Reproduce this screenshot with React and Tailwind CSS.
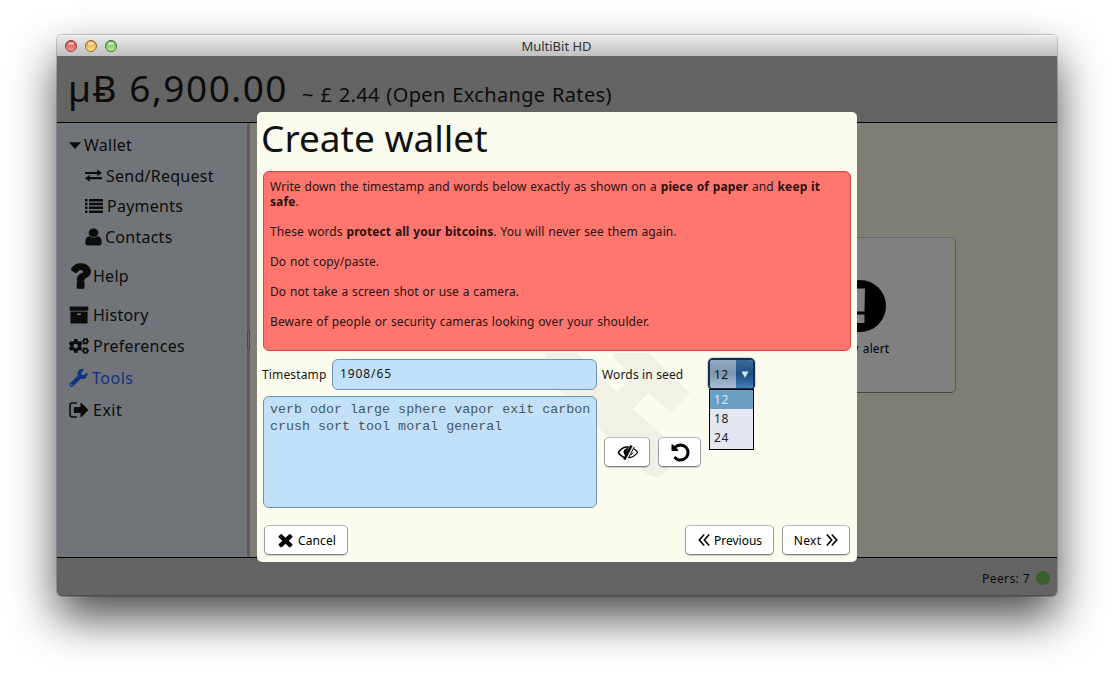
import React from 'react';
import { FaCogs, FaWrench } from 'react-icons/fa';

function Glyph({ d, className, weight = 0 }) {
  return (
    <svg viewBox="0 0 1792 1792" preserveAspectRatio="none" fill="currentColor" stroke="currentColor" strokeWidth={weight} className={'shrink-0 ' + className}>
      <path d={d} />
    </svg>
  );
}

const QUESTION =
  'M1088 1256v240q0 16-12 28t-28 12h-240q-16 0-28-12t-12-28v-240q0-16 12-28t28-12h240q16 0 28 12t12 28zm316-600q0 54-15.5 101t-35 76.5-55 59.5-57.5 43.5-61 35.5q-41 23-68.5 65t-27.500 67q0 17-12 32.500t-28 15.500h-240q-15 0-25.500-18.500t-10.500-37.500v-45q0-83 65-156.500t143-108.500q59-27 84-56t25-76q0-42-46.500-74t-107.500-32q-65 0-108 29-35 25-107 115-13 16-31 16-12 0-25-8l-164-125q-13-10-15.500-25t5.500-28q160-266 464-266 80 0 161 31t146 83 106 127.500 41 158.500z';
const TIMES =
  'M1490 1322q0 40-28 68l-136 136q-28 28-68 28t-68-28l-294-294-294 294q-28 28-68 28t-68-28l-136-136q-28-28-28-68t28-68l294-294-294-294q-28-28-28-68t28-68l136-136q28-28 68-28t68 28l294 294 294-294q28-28 68-28t68 28l136 136q28 28 28 68t-28 68l-294 294 294 294q28 28 28 68z';
const USER =
  'M1536 1399q0 109-62.5 187t-150.5 78h-854q-88 0-150.5-78t-62.5-187q0-85 8.5-160.5t31.5-152 58.5-131 94-89 134.5-34.5q131 128 313 128t313-128q76 0 134.5 34.5t94 89 58.5 131 31.5 152 8.5 160.5zm-256-887q0 159-112.5 271.5t-271.5 112.5-271.5-112.5-112.5-271.5 112.5-271.5 271.5-112.5 271.5 112.5 112.5 271.5z';
const UNDO =
  'M1664 896q0 156-61 298t-164 245-245 164-298 61q-172 0-327-72.5t-264-204.5q-7-10-6.5-22.5t8.5-20.5l137-138q10-9 25-9 16 2 23 12 73 95 179 147t225 52q104 0 198.5-40.5t163.5-109.5 109.5-163.5 40.5-198.5-40.5-198.5-109.5-163.5-163.5-109.5-198.5-40.5q-98 0-188 35.5t-160 101.5l137 138q31 30 14 69-17 40-59 40h-448q-26 0-45-19t-19-45v-448q0-42 40-59 39-17 69 14l130 129q107-101 244.5-156.5t284.5-55.5q156 0 298 61t245 164 164 245 61 298z';
const ARCHIVE =
  'M1088 832q0-26-19-45t-45-19h-256q-26 0-45 19t-19 45 19 45 45 19h256q26 0 45-19t19-45zm576-192v960q0 26-19 45t-45 19h-1408q-26 0-45-19t-19-45v-960q0-26 19-45t45-19h1408q26 0 45 19t19 45zm64-448v256q0 26-19 45t-45 19h-1536q-26 0-45-19t-19-45v-256q0-26 19-45t45-19h1536q26 0 45 19t19 45z';

const button =
  'flex h-[30px] items-center rounded-[5px] border border-t-[#bdbdbd] border-x-[#9c9c9c] border-b-[#808080] bg-white text-black shadow-[0_1px_1px_rgba(0,0,0,0.18)]';

function TrafficLight({ className }) {
  return (
    <span className={'relative flex h-3 w-3 justify-center rounded-full border ' + className}>
      <span className="mt-px h-[3px] w-[6px] rounded-full bg-white/60" />
    </span>
  );
}

function TitleBar() {
  return (
    <div className="flex h-[21px] items-center rounded-t-[5px] border-t border-[#f6f6f6] bg-linear-to-b from-[#e9e9e9] to-[#c0c0c0] pl-2">
      <div className="flex w-[120px] gap-2">
        <TrafficLight className="border-[#8f3a3c] bg-linear-to-b from-[#cf2f38] to-[#ff9a98]" />
        <TrafficLight className="border-[#946228] bg-linear-to-b from-[#dd9230] to-[#ffe88a]" />
        <TrafficLight className="border-[#3f7a2d] bg-linear-to-b from-[#5fae4a] to-[#b9f29a]" />
      </div>
      <div className="flex-1 pr-[129px] text-center text-[13px] leading-none text-[#333]">MultiBit HD</div>
    </div>
  );
}

function Header() {
  return (
    <header className="flex h-[67px] items-baseline border-b border-black bg-[#646464] pl-[11px] text-[#0c0c0c]">
      <span className="text-[37px] leading-[64px] tracking-[1.5px] whitespace-nowrap">µɃ 6,900.00</span>
      <span className="ml-[14px] text-[20px] tracking-[0.35px] whitespace-nowrap [word-spacing:1px]">~ £ 2.44 (Open Exchange Rates)</span>
    </header>
  );
}

function Sidebar() {
  return (
    <nav className="flex w-[190px] flex-col bg-[#717579] pt-[7px] pl-3 text-[16px] tracking-[0.25px] text-[#0c0c0c]">
      <div className="flex h-[30px] items-center">
        <svg viewBox="0 0 12 7" className="mr-[3px] h-[7px] w-3"><path d="M0 .3h12L6.5 6.6q-.5.5-1 0z" fill="currentColor" /></svg>
        Wallet
      </div>
      <div className="flex h-[31px] items-center pl-4">
        <svg viewBox="0 0 18 12" className="mr-1 h-[13px] w-[17px] overflow-visible" fill="currentColor">
          <path d="M0 2.200h13V-.3l4.900 3.600L13 6.900V4.500H0zM18 7.700H5V5.200L.1 8.900l4.900 3.600V10h13z" />
        </svg>
        Send/Request
      </div>
      <div className="flex h-[30px] items-center pl-4">
        <svg viewBox="0 0 18 14" className="mr-1 h-[14px] w-[18px]" fill="currentColor">
          <path d="M0 0h2.500v2.500H0zM0 3.800h2.500v2.500H0zM0 7.600h2.500v2.500H0zM0 11.400h2.500v2.500H0zM4 0h14v2.500H4zM4 3.800h14v2.500H4zM4 7.600h14v2.500H4zM4 11.400h14v2.500H4z" />
        </svg>
        Payments
      </div>
      <div className="flex h-8 items-center pl-4">
        <Glyph d={USER} className="-ml-[3px] h-5 w-[23px]" />
        Contacts
      </div>
      <div className="flex h-[46px] items-center">
        <Glyph d={QUESTION} weight={70} className="-ml-[7px] -mr-[5px] h-[34px] w-9" />
        <span>Help</span>
      </div>
      <div className="flex h-[31px] items-center">
        <Glyph d={ARCHIVE} className="mr-1 h-5 w-5" />
        History
      </div>
      <div className="flex h-8 items-center">
        <FaCogs className="mr-1 h-5 w-5" />
        Preferences
      </div>
      <div className="flex h-8 items-center tracking-[0.5px] text-[#0f3480]">
        <FaWrench className="mr-1 h-[18px] w-[19px]" />
        Tools
      </div>
      <div className="flex h-8 items-center tracking-[0.5px]">
        <svg viewBox="0 0 20 16" className="mr-1 h-4 w-5">
          <path d="M8 1H3.500Q1 1 1 3.500v9Q1 15 3.500 15H8" fill="none" stroke="currentColor" strokeWidth="1.600" />
          <path d="M5.500 5h6V1.300q.2-.8 1-.3l6.500 6.400q.5.600 0 1.200L12.500 15q-.8.500-1-.3V11h-6q-.7 0-.7-.7V5.700q0-.7.700-.7z" fill="currentColor" />
        </svg>
        Exit
      </div>
    </nav>
  );
}

function AlertCard() {
  return (
    <div className="flex h-[156px] w-[196px] flex-col items-center rounded-[5px] border border-t-[#666] border-x-[#5a5a5a] border-b-[#444] bg-[#808080] pt-[42px] text-black">
      <svg viewBox="0 0 52 52" className="ml-[3px] h-[52px] w-[52px]">
        <circle cx="26" cy="26" r="26" fill="#000" />
        <path d="M20 8.500h11l-.5 23h-10zM20.500 34.500h10V43h-10z" fill="#808080" />
      </svg>
      <span className="mt-[9px] mr-[14px] text-[12px] leading-[15px] tracking-[0.1px] [word-spacing:1px]">Security alert</span>
    </div>
  );
}

function Watermark() {
  return (
    <svg viewBox="257 112 600 450" className="absolute inset-0 h-full w-full">
      <path d="M547 353H577L598 374L617 392L634 376L614 358V353H648L690 393L671 412L648 393L633 409L668 440L669 467Q664 474 660 476Q653 478 647 474L540 372Z" fill="#f1f1e6" />
    </svg>
  );
}

function SeedSize() {
  return (
    <div className="relative ml-[23px] h-8 w-[47px]">
      <div className="flex h-8 overflow-hidden rounded-[5px] border-2 border-[#152f49] text-[12px] text-[#111] shadow-[0_0_2px_#4a7aa8]">
        <div className="flex flex-1 items-center bg-linear-to-b from-[#93a7bf] via-[#7f97b2] to-[#a9c0d8] pt-px pl-1 tracking-[0.5px]">12</div>
        <div className="flex w-[17px] items-center justify-center bg-linear-to-b from-[#3b6c9c] via-[#1d4f80] to-[#3f7db8]">
          <svg viewBox="0 0 8 7" className="h-[7px] w-2"><path d="M.5.500h7L4 6.800z" fill="#d5e8f7" /></svg>
        </div>
      </div>
      <div className="absolute top-[31px] left-px w-[45px] border border-black bg-[#e4e7f0] pb-[2px] text-[12px] leading-[19px] tracking-[0.6px] text-[#222]">
        <div className="bg-[#6a9fc5] pl-[4px] text-[#dfe9f2]">12</div>
        <div className="pl-[4px]">18</div>
        <div className="pl-[4px]">24</div>
      </div>
    </div>
  );
}

function CreateWallet() {
  return (
    <section className="absolute top-[77px] left-[200px] flex h-[450px] w-[600px] flex-col rounded-[5px] bg-[#fbfced] text-[12px] text-[#151515]">
      <Watermark />
      <div className="relative flex flex-1 flex-col pt-[2px] pr-[6px] pb-[7px] pl-[6px]">
        <h1 className="-ml-[2px] h-[57px] text-[37px] leading-[48px] text-[#111]">Create wallet</h1>
        <div className="h-[180px] rounded-[6px] border border-[#d9453f] bg-[#ff766e] pt-[7px] pl-[6px] leading-[15px] tracking-[0.1px] [word-spacing:0.55px] whitespace-nowrap text-[#2a1212]">
          <p>Write down the timestamp and words below exactly as shown on a <b>piece of paper</b> and <b>keep it</b></p>
          <p><b>safe</b>.</p>
          <p className="mt-[15px]">These words <b>protect all your bitcoins</b>. You will never see them again.</p>
          <p className="mt-[15px]">Do not copy/paste.</p>
          <p className="mt-[15px]">Do not take a screen shot or use a camera.</p>
          <p className="mt-[15px]">Beware of people or security cameras looking over your shoulder.</p>
        </div>
        <div className="relative z-10 mt-[7px] flex h-8 items-center">
          <span className="-ml-px w-[70px] pt-[2px] tracking-[0.15px]">Timestamp</span>
          <div className="flex h-[31px] w-[265px] items-center rounded-[6px] border border-[#6f94b3] bg-[#c2e1f8] pl-[7px] tracking-[0.9px]">1908/65</div>
          <span className="ml-[5px] w-[83px] pt-[2px] tracking-[0.15px]">Words in seed</span>
          <SeedSize />
        </div>
        <div className="mt-[6px] flex h-[112px]">
          <div className="w-[334px] rounded-[6px] border border-[#6f94b3] bg-[#c2e1f8] pt-[4px] pl-[6px] font-['Liberation_Mono',monospace] text-[13.35px] leading-[17px] whitespace-pre text-[#465764]">
            {'verb odor large sphere vapor exit carbon\ncrush sort tool moral general'}
          </div>
          <div className="mt-[41px] ml-[7px] flex gap-2">
            <div className={button + ' w-[46px] justify-center'}>
              <svg viewBox="0 0 22 16" className="ml-[2px] h-4 w-[22px]" fill="none" stroke="#000">
                <path d="M1.200 8.500Q5 3 10 3h2.500M1.200 8.500Q3.500 12 7 13.300" strokeWidth="1.500" />
                <path d="M17 4.800Q19.500 6.500 20.600 8.500Q17 13.300 11.500 13.800" strokeWidth="1.200" />
                <path d="M11.500 4Q7.500 3.800 6.500 7.500Q6.500 10.500 8.500 12z" fill="#000" stroke="none" />
                <path d="M14.500 1.500L7.300 15.500" strokeWidth="2.500" />
                <path d="M17.200 3L11.500 13.800M16 8.500L14 11" strokeWidth="1" />
              </svg>
            </div>
            <div className={button + ' w-[43px] justify-center'}>
              <Glyph d={UNDO} className="ml-[2px] h-[21px] w-[21px]" />
            </div>
          </div>
        </div>
        <div className="mt-auto flex">
          <div className={button + ' ml-px w-[84px] pl-[10px]'}>
            <Glyph d={TIMES} className="mr-[2px] h-[20px] w-[21px]" />
            <span className="pt-[2px] tracking-[0.1px]">Cancel</span>
          </div>
          <div className={button + ' ml-auto w-[89px] justify-center gap-1'}>
            <svg viewBox="0 0 12 12" className="ml-px h-3 w-3"><path d="M6.200.5L1.300 6l4.900 5.500M11.200.500L6.300 6l4.900 5.500" fill="none" stroke="#000" strokeWidth="1.600" /></svg>
            <span className="pt-[2px]">Previous</span>
          </div>
          <div className={button + ' ml-2 mr-px w-[68px] justify-center gap-[5px]'}>
            <span className="pt-[2px] tracking-[0.3px]">Next</span>
            <svg viewBox="0 0 12 12" className="h-3 w-3"><path d="M.8.500L5.700 6 .8 11.500M5.800.500L10.700 6l-4.900 5.500" fill="none" stroke="#000" strokeWidth="1.600" /></svg>
          </div>
        </div>
      </div>
    </section>
  );
}

export default function App() {
  return (
    <div className="h-[674px] w-[1114px] overflow-hidden bg-white pt-[35px] pl-[57px] font-['Noto_Sans',sans-serif]">
      <div className="relative flex h-[561px] w-[1000px] flex-col rounded-[5px] shadow-[0_0_0_1px_rgba(0,0,0,0.2),0_22px_46px_rgba(0,0,0,0.7)]">
        <TitleBar />
        <Header />
        <div className="flex h-[435px] border-b border-black">
          <Sidebar />
          <div className="flex w-[3px] flex-col justify-center bg-[#5c5c5c]">
            <span className="h-[18px] w-[3px] border border-[#484848] bg-[#6a6a6a]" />
          </div>
          <main className="flex flex-1 items-start justify-end bg-[#7e7e75] pt-[114px] pr-[101px]">
            <AlertCard />
          </main>
        </div>
        <footer className="flex flex-1 items-center justify-end gap-[6px] rounded-b-[5px] border-b border-[#4c4c4c] bg-[#646464] pr-[7px] pt-[3px] text-[12px] tracking-[0.4px] text-[#0c0c0c]">
          <span className="pt-px">Peers: 7</span>
          <span className="h-[14px] w-[14px] rounded-full bg-[#38602a]" />
        </footer>
        <CreateWallet />
      </div>
    </div>
  );
}
